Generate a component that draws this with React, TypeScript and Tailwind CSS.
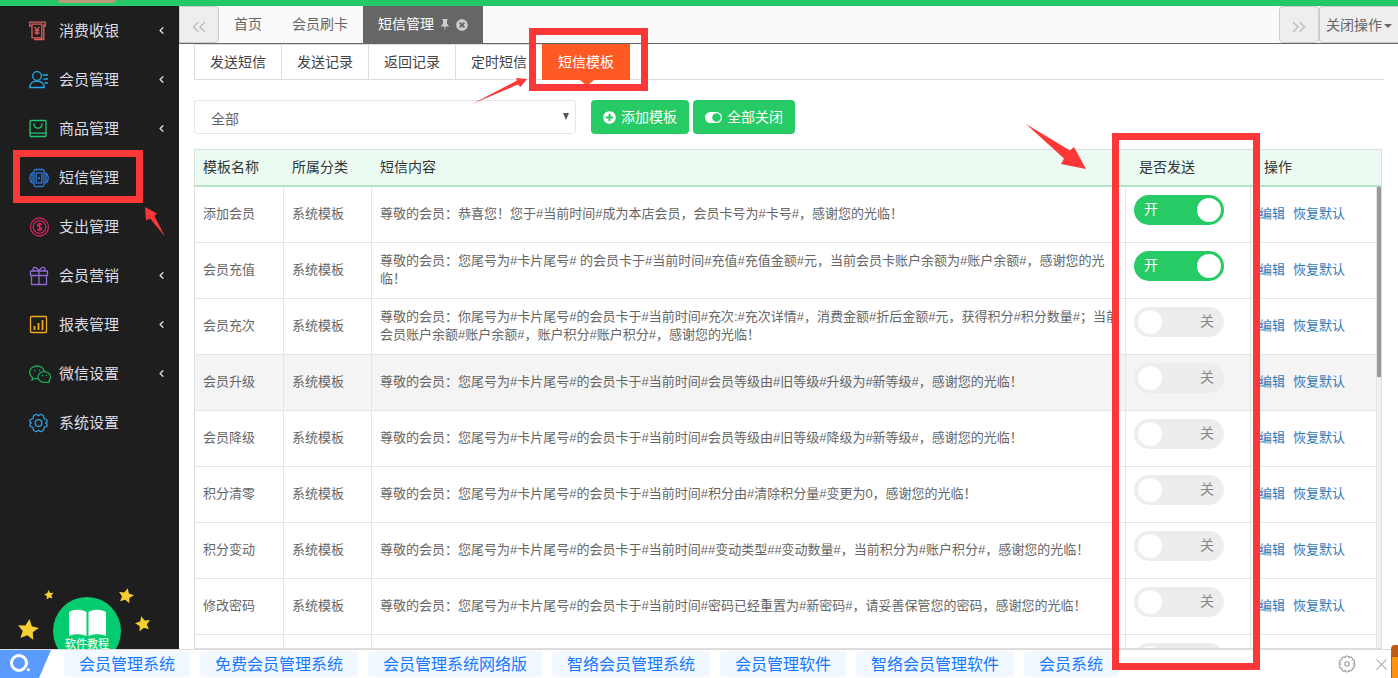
import { useState } from 'react';
import type { ReactNode } from 'react';
import { ChevronLeft, ChevronsLeft, ChevronsRight, X } from 'lucide-react';
import { FaPlusCircle, FaTimesCircle } from 'react-icons/fa';

type MenuItem = { label: string; color: string; icon: ReactNode; expandable: boolean };

const menu: MenuItem[] = [
  {
    label: '消费收银',
    color: 'text-[#d9605a]',
    expandable: true,
    icon: (
      <>
        <path d="M2.500 5H.7V1.200h15.600V5H14.500" />
        <path d="M3 3.200h9.800v13.600H3zM14.800 3.200v15.300H5" />
        <path d="M5.500 6l2.500 3 2.500-3M8 9v5M5.500 9.700h5M5.500 12h5" />
      </>
    ),
  },
  {
    label: '会员管理',
    color: 'text-[#22a7e8]',
    expandable: true,
    icon: (
      <>
        <circle cx="8" cy="6" r="4.300" />
        <path d="M.8 17.500c0-4 3-6.500 7.200-6.500s7.200 2.500 7.200 6.500z" />
        <path d="M13.500 5H19M14.500 9H19M15.500 13H19" />
      </>
    ),
  },
  {
    label: '商品管理',
    color: 'text-[#1fc774]',
    expandable: true,
    icon: (
      <>
        <rect x="1" y="1.500" width="16" height="16" rx="1" />
        <path d="M1 14.200h16M5 5c0 5.500 8 5.500 8 0M4.500 5h1M12.500 5h1" />
      </>
    ),
  },
  {
    label: '短信管理',
    color: 'text-[#2f78d4]',
    expandable: false,
    icon: (
      <>
        <rect x="5" y="1.500" width="10" height="17" rx="1.500" />
        <rect x="7.200" y="5" width="5.600" height="10" />
        <path d="M4.500 4.500C-.5 6-.5 14 4.500 15.500M15.500 4.500c5 1.500 5 9.500 0 11M3 5.500v9M17 5.500v9" />
        <path d="M10 9v2" strokeWidth="2" />
      </>
    ),
  },
  {
    label: '支出管理',
    color: 'text-[#c9285a]',
    expandable: false,
    icon: (
      <>
        <circle cx="10.500" cy="10" r="9" />
        <circle cx="10.500" cy="10" r="6.300" />
        <path
          d="M12.700 7.800c-.6-1.200-4.200-1.400-4.200.6 0 1.900 4.200 1.100 4.200 3.100 0 2.100-3.800 1.900-4.400.5M10.500 5.800v8.400"
          strokeWidth="1.600"
        />
      </>
    ),
  },
  {
    label: '会员营销',
    color: 'text-[#8f6ad6]',
    expandable: true,
    icon: (
      <>
        <rect x="1.500" y="5" width="17" height="4.500" rx=".5" />
        <path d="M2.500 9.500V18.500h15V9.500M10 5v13.500" />
        <path d="M10 5C8 1 5.500.8 4.500 2S4.500 5 5 5M10 5c2-4 4.500-4.200 5.500-3S15.500 5 15 5" />
      </>
    ),
  },
  {
    label: '报表管理',
    color: 'text-[#f0ab24]',
    expandable: true,
    icon: (
      <>
        <rect x="1.500" y="1.500" width="16" height="16" rx="1" />
        <path d="M5.500 11v4M9.500 8v7M13.500 5v10" strokeWidth="1.800" />
      </>
    ),
  },
  {
    label: '微信设置',
    color: 'text-[#1ba85c]',
    expandable: true,
    icon: (
      <>
        <path d="M15.200 7.500C14.500 4 11.500 2 8 2 4 2 .7 4.700.7 8.300c0 2.200 1.200 4 3 5.200L3 16l3-1.500 3 .3" />
        <path d="M21.500 13c0-3-2.700-5.300-6.200-5.300S9 10 9 13s2.800 5.300 6.300 5.300h4l1.200-.8-.3-1.300c.8-.9 1.300-2 1.300-3.200z" />
        <path d="M5 6.500h1.300M10 6.500h1.300M12.700 11.500H14M16.700 11.500H18" strokeWidth="1.600" />
      </>
    ),
  },
  {
    label: '系统设置',
    color: 'text-[#2f9fe0]',
    expandable: false,
    icon: (
      <>
        <path
          d="M7.200 1.200 9.500 2.600 11.800 1.200 14.500 2.700 15 5.500 18 7v2l-1.300 1 1.300 1v2.200l-3 1.300-.5 2.800-2.700 1.500-2.300-1.400-2.300 1.400-2.700-1.500-.5-2.800L1 13.200V11l1.300-1L1 9V7l3-1.500.5-2.800z"
          strokeLinejoin="round"
        />
        <circle cx="9.500" cy="10" r="3.300" />
      </>
    ),
  },
];

const subTabs = ['发送短信', '发送记录', '返回记录', '定时短信', '短信模板'];

const templates = [
  { name: '添加会员', enabled: true, content: '尊敬的会员：恭喜您！您于#当前时间#成为本店会员，会员卡号为#卡号#，感谢您的光临！' },
  { name: '会员充值', enabled: true, content: '尊敬的会员：您尾号为#卡片尾号# 的会员卡于#当前时间#充值#充值金额#元，当前会员卡账户余额为#账户余额#，感谢您的光临！' },
  { name: '会员充次', enabled: false, content: '尊敬的会员：你尾号为#卡片尾号#的会员卡于#当前时间#充次:#充次详情#，消费金额#折后金额#元，获得积分#积分数量#；当前会员账户余额#账户余额#，账户积分#账户积分#，感谢您的光临！' },
  { name: '会员升级', enabled: false, content: '尊敬的会员：您尾号为#卡片尾号#的会员卡于#当前时间#会员等级由#旧等级#升级为#新等级#，感谢您的光临！' },
  { name: '会员降级', enabled: false, content: '尊敬的会员：您尾号为#卡片尾号#的会员卡于#当前时间#会员等级由#旧等级#降级为#新等级#，感谢您的光临！' },
  { name: '积分清零', enabled: false, content: '尊敬的会员：您尾号为#卡片尾号#的会员卡于#当前时间#积分由#清除积分量#变更为0，感谢您的光临！' },
  { name: '积分变动', enabled: false, content: '尊敬的会员：您尾号为#卡片尾号#的会员卡于#当前时间##变动类型##变动数量#，当前积分为#账户积分#，感谢您的光临！' },
  { name: '修改密码', enabled: false, content: '尊敬的会员：您尾号为#卡片尾号#的会员卡于#当前时间#密码已经重置为#新密码#，请妥善保管您的密码，感谢您的光临！' },
  { name: '', enabled: false, content: '' },
];

const searchLinks = [
  '会员管理系统',
  '免费会员管理系统',
  '会员管理系统网络版',
  '智络会员管理系统',
  '会员管理软件',
  '智络会员管理软件',
  '会员系统',
];

const Star = ({ x, y, size, rotate }: { x: number; y: number; size: number; rotate: number }) => (
  <path
    transform={`translate(${x} ${y}) rotate(${rotate}) scale(${size})`}
    d="M0-10 2.900-3.800 9.500-3.100 4.600 1.500 5.900 8.100 0 4.800-5.900 8.100-4.600 1.500-9.500-3.100-2.900-3.800z"
    fill="#f7cf33"
  />
);

const Sidebar = () => (
  <aside className="flex w-[179px] shrink-0 flex-col overflow-hidden bg-[#1e1e1e]">
    <nav>
      {menu.map((item) => (
        <a key={item.label} href="#" className="flex h-[49px] items-center pr-3 pl-[29px] text-[15px] text-[#dcdce6]">
          <svg
            viewBox="0 0 22 20"
            className={`mr-2 h-5 w-[22px] shrink-0 ${item.color}`}
            fill="none"
            stroke="currentColor"
            strokeWidth="1.3"
          >
            {item.icon}
          </svg>
          <span className="flex-1 pt-px">{item.label}</span>
          {item.expandable && <ChevronLeft size={11} strokeWidth={3} />}
        </a>
      ))}
    </nav>
    <svg viewBox="0 0 179 64" className="mt-auto h-16 w-full shrink-0" role="img" aria-label="软件教程">
      <circle cx="87" cy="46" r="34" fill="#06cc70" />
      <path d="M69 27c5-3 12-3 17.500 0v24c-5.500-2.500-12.500-2.500-17.500 0zM88.500 27c5-3 12-3 17.500 0v24c-5-2.500-12-2.500-17.500 0z" fill="#fff" />
      <text x="87" y="63" textAnchor="middle" fontSize="11" fontWeight="500" fill="#e4ffef">
        软件教程
      </text>
      <Star x={28} y={45} size={1.1} rotate={8} />
      <Star x={49} y={10} size={0.5} rotate={-8} />
      <Star x={126} y={11} size={0.8} rotate={12} />
      <Star x={143} y={39} size={0.8} rotate={-12} />
    </svg>
  </aside>
);

const PageTabs = () => (
  <div className="flex h-[38px] shrink-0 border-b border-[#666] bg-[#fafafa] text-[14px] text-[#666]">
    <button className="flex w-10 items-center justify-center rounded-r border border-[#ccc] bg-[#eee] pt-1 text-[#bbb]" aria-label="向左滚动">
      <ChevronsLeft size={22} strokeWidth={1.5} />
    </button>
    <a href="#" className="flex items-center px-[15px]">首页</a>
    <a href="#" className="flex items-center px-[15px]">会员刷卡</a>
    <div className="flex w-[120px] items-center bg-[#666] pl-[15px] text-white">
      短信管理
      <svg viewBox="0 0 8 12" className="mr-[7px] ml-[7px] h-3 w-2" fill="#ccc">
        <path d="M1.500 0h5v1.200H6V5c1.200.6 1.800 1.400 1.800 2.500H4.600L4 12l-.6-4.500H.2C.2 6.400.8 5.600 2 5V1.200h-.5z" />
      </svg>
      <button aria-label="关闭短信管理" className="text-[#ccc]">
        <FaTimesCircle size={12} />
      </button>
    </div>
    <button className="ml-auto flex w-10 items-center justify-center rounded border border-[#ccc] bg-[#eee] pt-1 text-[#bbb]" aria-label="向右滚动">
      <ChevronsRight size={22} strokeWidth={1.5} />
    </button>
    <button className="flex items-center gap-0.5 rounded-l border border-r-0 border-[#ccc] bg-[#eee] px-1.5 pt-0.5">
      关闭操作
      <svg viewBox="0 0 8 4" className="h-1 w-2" fill="#666">
        <path d="M0 0h8L4 4z" />
      </svg>
    </button>
  </div>
);

const SubTabs = () => (
  <div className="mr-3.5 flex h-9 shrink-0 border-b border-[#ddd] text-[14px] text-[#444]">
    {subTabs.map((tab) =>
      tab === '短信模板' ? (
        <a key={tab} href="#" className="relative -ml-px flex h-9 w-[88px] items-center justify-center bg-[#ff5a24] text-white">
          {tab}
          <svg viewBox="0 0 14 6" className="absolute top-full left-[38px] h-1.5 w-3.5" fill="#ff5a24">
            <path d="M0 0h14L7 6z" />
          </svg>
        </a>
      ) : (
        <a
          key={tab}
          href="#"
          className="flex w-[87px] items-center justify-center border-t border-r border-[#ddd] first:w-[88px] first:border-l"
        >
          {tab}
        </a>
      ),
    )}
  </div>
);

const SendSwitch = ({ label, initial }: { label: string; initial: boolean }) => {
  const [on, setOn] = useState(initial);
  return (
    <label
      className={`relative flex h-[30px] w-[90px] cursor-pointer items-center justify-between rounded-full text-[14px] ${
        on ? 'bg-[#26cb66] pr-[3px] pl-2.5 text-white' : 'bg-[#ededed] pr-2.5 pl-1 text-[#888]'
      }`}
    >
      <input
        type="checkbox"
        className="sr-only"
        aria-label={`${label}是否发送`}
        checked={on}
        onChange={() => setOn(!on)}
      />
      {on && <span className="pb-0.5">开</span>}
      <span className="h-6 w-6 rounded-full bg-white" />
      {!on && <span className="pb-0.5">关</span>}
    </label>
  );
};

const TemplateTable = () => (
  <div className="relative mt-[15px] mr-4 min-h-0 flex-1 overflow-hidden border border-[#ddd]">
    <table className="w-full table-fixed border-separate border-spacing-0 text-left text-[13px] leading-[18px] text-[#666]">
      <colgroup>
        <col className="w-[89px]" />
        <col className="w-[88px]" />
        <col />
        <col className="w-[125px]" />
        <col className="w-[130px]" />
      </colgroup>
      <thead>
        <tr className="h-[37px] bg-[#ebfbf1] text-[14px] text-[#333]">
          <th className="border-b-2 border-[#b2e5c7] px-2 pb-0.5 font-normal">模板名称</th>
          <th className="border-b-2 border-[#b2e5c7] px-2 pb-0.5 font-normal">所属分类</th>
          <th className="border-b-2 border-[#b2e5c7] px-2 pb-0.5 font-normal">短信内容</th>
          <th className="border-b-2 border-[#b2e5c7] px-[13px] pb-0.5 font-normal">是否发送</th>
          <th className="border-b-2 border-[#b2e5c7] px-[13px] pb-0.5 font-normal">操作</th>
        </tr>
      </thead>
      <tbody>
        {templates.map((row) => (
          <tr key={row.name} className={row.name === '会员升级' ? 'h-14 bg-[#f4f4f4]' : 'h-14'}>
            <td className="border-r border-b border-[#e5e5e5] px-2 pb-0.5">{row.name}</td>
            <td className="border-r border-b border-[#e5e5e5] px-2 pb-0.5">{row.name && '系统模板'}</td>
            <td className="border-r border-b border-[#e5e5e5] pr-1 pb-0.5 pl-2">{row.content}</td>
            <td className="border-r border-b border-[#e5e5e5] px-2 pt-2 align-top">
              <SendSwitch label={row.name} initial={row.enabled} />
            </td>
            <td className="border-b border-[#e5e5e5] px-2 pb-0.5 text-[#337ab7]">
              {row.name && (
                <div className="flex gap-2">
                  <a href="#">编辑</a>
                  <a href="#">恢复默认</a>
                </div>
              )}
            </td>
          </tr>
        ))}
      </tbody>
    </table>
    {/* 滚动条 */}
    <div className="absolute top-[37px] right-0 bottom-0 w-[5px] border-l border-[#e5e5e5] bg-[#f1f1f1]">
      <div className="h-[190px] bg-[#999]" />
    </div>
  </div>
);

const SearchBar = () => (
  <footer className="flex h-[29px] shrink-0 items-center border-t border-[#ddd] bg-white">
    <svg viewBox="0 0 52 28" className="mr-3 h-7 w-[52px] shrink-0">
      <path d="M0 0h51L39 28H0z" fill="#5a9bff" />
      <circle cx="19" cy="13" r="7.500" fill="none" stroke="#fff" strokeWidth="3" />
      <circle cx="28.300" cy="19.700" r="1.500" fill="#fff" />
    </svg>
    <div className="flex gap-2.5 overflow-hidden text-[16px] whitespace-nowrap text-[#1677ff]">
      {searchLinks.map((link) => (
        <a key={link} href="#" className="rounded-sm bg-[#f2f8ff] px-[15px] pt-0.5 leading-6">
          {link}
        </a>
      ))}
    </div>
    <button className="mr-4 ml-auto text-[#999]" aria-label="设置">
      <svg viewBox="0 0 18 18" className="h-[18px] w-[18px]" fill="none" stroke="currentColor" strokeWidth="1.1">
        <path d="M7 2.500Q7 1 9 1t2 1.500q1-1.200 2.400-.3T14.300 4.800q2-.2 2.200 1T15.700 8q1.300.3 1.300 1.200t-1.300 1.100q1 .8.500 2t-1.900 1q.2 1.700-.9 2.400T11 15.500Q11 17 9 17t-2-1.500q-1 1.200-2.400.3t-.9-2.500q-1.600.2-2-1T2.300 10Q1 9.700 1 9t1.300-1.200q-1-.8-.5-2t1.900-1q-.2-1.700.9-2.500t2.400.2z" />
        <circle cx="9" cy="9" r="2.200" />
      </svg>
    </button>
    <button className="mr-[7px] text-[#999]" aria-label="关闭">
      <X size={19} strokeWidth={1.3} />
    </button>
  </footer>
);

// 教程标注：红框与箭头
const Annotations = () => (
  <div className="pointer-events-none absolute inset-0 overflow-hidden">
    <div className="absolute top-[150px] left-[13px] h-[53px] w-[130px] border-7 border-[#fc3737]" />
    <svg viewBox="0 0 20 30" className="absolute top-[207px] left-[145px] h-[30px] w-5" fill="#fc3737">
      <path d="M0 0 12 6.500 9.500 9 20 29.500 5 11.500 1 13.500z" />
    </svg>
    <div className="absolute top-[28px] left-[529px] h-[63px] w-[119px] border-7 border-[#fc3737]" />
    <svg viewBox="0 0 55 26" className="absolute top-[78px] left-[472px] h-[26px] w-[55px]" fill="#fc3737">
      <path d="M55 1 44 0 45 2.500 0 26 46 6.500 48.500 9z" />
    </svg>
    <div className="absolute top-[133px] right-[138px] h-[537px] w-[148px] border-7 border-[#fc3737]" />
    <svg viewBox="0 0 60 46" className="absolute top-[124px] right-[312px] h-[46px] w-[60px]" fill="#fc3737">
      <path d="M0 0 44 26.500 48 23 60 45 35 40 38 34.500z" />
    </svg>
    <div className="absolute right-0 bottom-0 h-[33px] w-[7px] rounded-tl border-t-[12px] border-l border-[#c05a14] bg-[#ff9410]" />
  </div>
);

const App = () => {
  const [category, setCategory] = useState('全部');

  return (
    <div className="relative flex h-screen flex-col overflow-hidden bg-white font-['Liberation_Sans','Noto_Sans_CJK_SC',sans-serif]">
      <header className="h-1.5 shrink-0 bg-[#22c966] pl-[58px]">
        <div className="h-[3px] w-[58px] rounded-b bg-[#b89b78]" />
      </header>
      <div className="flex min-h-0 flex-1">
        <Sidebar />
        <main className="flex min-w-0 flex-1 flex-col">
          <PageTabs />
          <div className="flex min-h-0 flex-1 flex-col pl-[15px]">
            <SubTabs />
            <div className="mt-5 flex shrink-0">
              <div className="relative mr-[15px] w-[382px]">
                <select
                  aria-label="模板分类"
                  value={category}
                  onChange={(e) => setCategory(e.target.value)}
                  className="h-[34px] w-full appearance-none rounded-[3px] border border-[#e5e5e5] bg-white pt-1 pl-4 text-[14px] text-[#666]"
                >
                  <option>全部</option>
                  <option>系统模板</option>
                </select>
                <svg viewBox="0 0 6 7" className="absolute top-[13px] right-[7px] h-[7px] w-1.5" fill="#555">
                  <path d="M0 0h6L3 7z" />
                </svg>
              </div>
              <button className="mr-1 flex h-[34px] items-center gap-[5px] rounded bg-[#26cb66] px-3 text-[14px] text-white">
                <FaPlusCircle size={13} />
                添加模板
              </button>
              <button className="flex h-[34px] items-center gap-[5px] rounded bg-[#26cb66] px-3 text-[14px] text-white">
                <svg viewBox="0 0 17 11" className="h-[11px] w-[17px]">
                  <rect width="17" height="11" rx="5.500" fill="#fff" />
                  <circle cx="11.500" cy="5.500" r="4.300" fill="#26cb66" />
                </svg>
                全部关闭
              </button>
            </div>
            <TemplateTable />
          </div>
        </main>
      </div>
      <SearchBar />
      <Annotations />
    </div>
  );
};

export default App;
